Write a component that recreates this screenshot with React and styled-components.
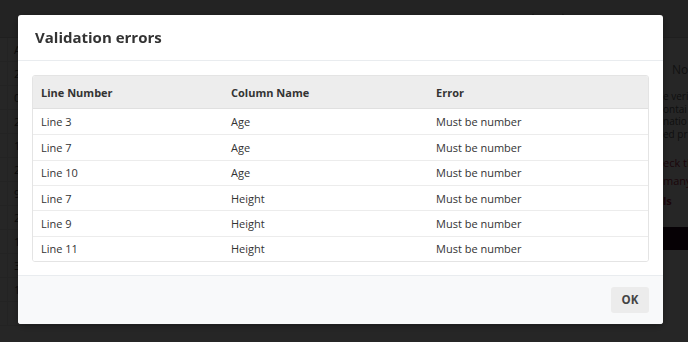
import React from "react";
import styled, { createGlobalStyle } from "styled-components";

const Global = createGlobalStyle`
  html, body { margin: 0; padding: 0; }
  body {
    width: 688px; height: 342px; overflow: hidden;
    font-family: "Open Sans", "Noto Sans", sans-serif;
    background: #ffffff;
  }
  *, *::before, *::after { box-sizing: border-box; }
`;

/* ---------- background application (dimmed by overlay) ---------- */
const AppShell = styled.div`
  width: 688px; height: 342px;
  display: flex; flex-direction: column;
  background: #ffffff;
`;
const TopBar = styled.div`
  height: 38px; flex: none;
  display: flex; align-items: center; gap: 12px;
  padding-left: 528px;
  background: #e9e9e9;
  border-bottom: 1px solid #d0d0d0;
  color: #777;
`;
const Workspace = styled.div`
  flex: 1; display: flex; min-height: 0;
`;
const Grid = styled.div`
  flex: 1;
  display: flex; flex-direction: column;
`;
const GridRow = styled.div`
  height: 24px; flex: none;
  display: grid; grid-template-columns: 8px 1fr;
  border-bottom: 1px solid #e6e6e6;
  font-size: 11px; color: #555;
`;
const GridCell = styled.div`
  border-right: 1px solid #e6e6e6;
  display: flex; align-items: center; padding-left: 6px;
  &:last-child { border-right: none; }
`;
const SidePanel = styled.div`
  width: 25px; flex: none;
  overflow: hidden;
  display: flex; flex-direction: column;
  font-size: 10px; line-height: 12.5px; color: #666;
  white-space: nowrap;
`;
const PanelTitle = styled.div`
  font-size: 12px; line-height: 16px; padding: 24px 0 12px 9px; color: #777;
`;
const PanelLine = styled.div`
  color: ${(p) => (p.$red ? "#b02a4a" : "#666")};
  font-weight: ${(p) => (p.$bold ? 700 : 400)};
  font-size: ${(p) => (p.$red ? "11px" : "10px")};
  line-height: ${(p) => p.$lh || "12.5px"};
  margin-top: ${(p) => p.$mt || "0"};
`;
const PanelBand = styled.div`
  height: 23px; margin-top: 17px; background: #2a0a22;
`;

/* ---------- modal ---------- */
const Overlay = styled.div`
  position: fixed; inset: 0;
  background: rgba(0, 0, 0, 0.85);
  display: flex; align-items: flex-start;
  padding: 15px 0 0 18px;
`;
const Modal = styled.div`
  width: 645px;
  background: #ffffff;
  border-radius: 3px;
  overflow: hidden;
  box-shadow: 0 2px 8px rgba(0,0,0,0.3);
  display: flex; flex-direction: column;
`;
const Header = styled.div`
  height: 46px;
  display: flex; align-items: center;
  padding: 0 17px 1px;
  border-bottom: 1px solid #e9ecef;
`;
const Title = styled.h2`
  margin: 0; font-size: 15px; font-weight: 700; color: #333;
`;
const Body = styled.div`
  padding: 14px 14px 13px;
`;
const Table = styled.div`
  border: 1px solid #e4e4e4;
  border-radius: 3px;
  overflow: hidden;
`;
const Row = styled.div`
  display: grid;
  grid-template-columns: 190px 205px 1fr;
  height: ${(p) => (p.$head ? "33px" : "25.33px")};
  align-items: center;
  background: ${(p) => (p.$head ? "#ededed" : "#fff")};
  border-top: ${(p) => (p.$head || p.$first ? "none" : "1px solid #ececec")};
  border-bottom: ${(p) => (p.$head ? "1px solid #e0e0e0" : "none")};
  font-size: 11px;
  font-weight: ${(p) => (p.$head ? 700 : 400)};
  color: #333;
`;
const Cell = styled.div`
  padding-left: 8px;
  white-space: nowrap;
`;
const Footer = styled.div`
  height: 49px;
  display: flex; align-items: center; justify-content: flex-end;
  padding: 0 14px;
  background: #f8f9fa;
  border-top: 1px solid #e9ecef;
`;
const OkButton = styled.button`
  width: 38px; height: 26px;
  border: none; border-radius: 3px;
  background: #ececec; color: #444;
  font-family: "Open Sans", sans-serif;
  font-size: 11.5px; font-weight: 700;
  padding: 0;
`;

const errors = [
  ["Line 3", "Age"],
  ["Line 7", "Age"],
  ["Line 10", "Age"],
  ["Line 7", "Height"],
  ["Line 9", "Height"],
  ["Line 11", "Height"],
];

const bgRows = ["A", "2", "0", "2", "1", "2", "9", "2", "1", "3", "1", ""];

const UndoIcon = ({ flip }) => (
  <svg width="14" height="14" viewBox="0 0 24 24" fill="none" stroke="currentColor"
    strokeWidth="2" strokeLinecap="round" strokeLinejoin="round"
    style={flip ? { transform: "scaleX(-1)" } : undefined}>
    <path d="M9 14 4 9l5-5" />
    <path d="M4 9h10.5a5.5 5.5 0 0 1 0 11H11" />
  </svg>
);

export default function App() {
  return (
    <>
      <Global />
      <AppShell>
        <TopBar>
          <UndoIcon />
          <UndoIcon flip />
        </TopBar>
        <Workspace>
          <Grid>
            {bgRows.map((t, i) => (
              <GridRow key={i}>
                <GridCell />
                <GridCell>{t}</GridCell>
              </GridRow>
            ))}
          </Grid>
          <SidePanel>
            <PanelTitle>No</PanelTitle>
            <PanelLine>e veri</PanelLine>
            <PanelLine>ontai</PanelLine>
            <PanelLine>natio</PanelLine>
            <PanelLine>ed pr</PanelLine>
            <PanelLine $red $mt="14px" $lh="18px">eck th</PanelLine>
            <PanelLine $red $lh="18px">many</PanelLine>
            <PanelLine $red $bold $mt="2px" $lh="18px">ls</PanelLine>
            <PanelBand />
          </SidePanel>
        </Workspace>
      </AppShell>
      <Overlay>
        <Modal>
          <Header>
            <Title>Validation errors</Title>
          </Header>
          <Body>
            <Table>
              <Row $head>
                <Cell>Line Number</Cell>
                <Cell>Column Name</Cell>
                <Cell>Error</Cell>
              </Row>
              {errors.map(([line, col], i) => (
                <Row key={i} $first={i === 0}>
                  <Cell>{line}</Cell>
                  <Cell>{col}</Cell>
                  <Cell>Must be number</Cell>
                </Row>
              ))}
            </Table>
          </Body>
          <Footer>
            <OkButton>OK</OkButton>
          </Footer>
        </Modal>
      </Overlay>
    </>
  );
}
